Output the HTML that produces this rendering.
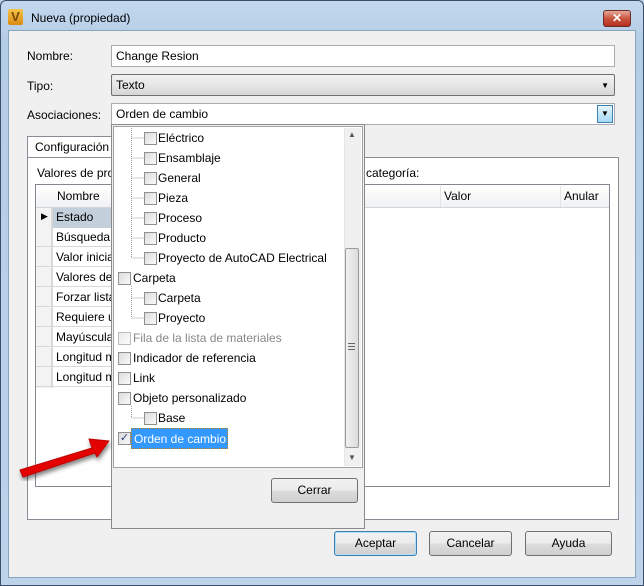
<!DOCTYPE html><html><head><meta charset="utf-8"><style>
*{box-sizing:border-box;margin:0;padding:0}
body{width:644px;height:586px;position:relative;overflow:hidden;font-family:"Liberation Sans",sans-serif;font-size:12px;color:#000;background:#bcd3ea}
.a{position:absolute}
.win{left:0;top:0;width:644px;height:586px;border:1px solid #3b5068;border-radius:6px 6px 0 0;background:linear-gradient(#c3d8ee,#b4cde6 40px,#bcd3ea)}
.client{left:8px;top:30px;width:628px;height:548px;background:#f0f0f0;border:1px solid #8aa2bb}
.lbl{font-size:12px}
.inp{background:#fff;border:1px solid #abadb3;height:22px;padding:3px 4px}
.btn{border:1px solid #707070;border-radius:3px;background:linear-gradient(#f2f2f2,#ebebeb 50%,#dddddd 51%,#cfcfcf);text-align:center;line-height:22px}
.cb{width:13px;height:13px;border:1px solid #8e8f8f;background:linear-gradient(135deg,#dcdcdc,#fafafa)}
.it{position:absolute;height:20px;line-height:20px;white-space:nowrap}
</style></head><body>
<div class="a win"></div>
<div class="a" style="left:8px;top:9px;width:15px;height:16px;background:linear-gradient(#f7c44a,#d98a10);border-radius:2px;color:#7a4a00;font-weight:bold;font-size:13px;line-height:16px;text-align:center">V</div>
<div class="a" style="left:31px;top:11px;font-size:12px">Nueva (propiedad)</div>
<div class="a" style="left:603px;top:10px;width:28px;height:17px;border:1px solid #6e2a24;border-radius:3px;background:linear-gradient(#e6a99b,#c9543f 50%,#b3301e);color:#fff;font-weight:bold;text-align:center;line-height:15px;font-size:12px">✕</div>
<div class="a client"></div>
<div class="a lbl" style="left:27px;top:49px">Nombre:</div>
<div class="a inp" style="left:111px;top:45px;width:504px">Change Resion</div>
<div class="a lbl" style="left:27px;top:79px">Tipo:</div>
<div class="a inp" style="left:111px;top:74px;width:504px;border-color:#707070;border-radius:2px;background:linear-gradient(#f2f2f2,#e6e6e6 50%,#d6d6d6)">Texto<span class="a" style="right:5px;top:6px;font-size:8px">▼</span></div>
<div class="a lbl" style="left:27px;top:108px">Asociaciones:</div>
<div class="a inp" style="left:111px;top:103px;width:504px">Orden de cambio<div class="a" style="right:1px;top:1px;width:16px;height:18px;border:1px solid #3c7fb1;background:linear-gradient(#e5f4fc,#a7d9f5);font-size:8px;text-align:center;line-height:16px">▼</div></div>
<div class="a" style="left:27px;top:136px;width:90px;height:22px;background:#fff;border:1px solid #898c95;border-bottom:none;padding:3px 7px">Configuración</div>
<div class="a" style="left:27px;top:157px;width:592px;height:363px;background:#fff;border:1px solid #898c95"></div>
<div class="a" style="left:37px;top:166px">Valores de pro</div>
<div class="a" style="left:366px;top:166px">categoría:</div>
<div class="a" style="left:35px;top:184px;width:575px;height:303px;border:1px solid #828790;background:#fff"></div>
<div class="a" style="left:36px;top:185px;width:573px;height:23px;background:linear-gradient(#fff,#f1f2f4);border-bottom:1px solid #d5d5d5"></div>
<div class="a" style="left:57px;top:189px">Nombre</div>
<div class="a" style="left:444px;top:189px">Valor</div>
<div class="a" style="left:440px;top:186px;width:1px;height:21px;background:#e3e4e6"></div>
<div class="a" style="left:560px;top:186px;width:1px;height:21px;background:#e3e4e6"></div>
<div class="a" style="left:564px;top:189px">Anular</div>
<div class="a" style="left:36px;top:208px;width:16px;height:180px;background:#f3f3f3;border-right:1px solid #d8d8d8"></div>
<div class="a" style="left:52px;top:208px;width:60px;height:20px;background:#c4cfdc"></div>
<div class="a" style="left:41px;top:211px;font-size:9px">▶</div>
<div class="a" style="left:56px;top:210px">Estado</div>
<div class="a" style="left:56px;top:230px">Búsqueda</div>
<div class="a" style="left:56px;top:250px">Valor inicial</div>
<div class="a" style="left:56px;top:270px">Valores de</div>
<div class="a" style="left:56px;top:290px">Forzar lista</div>
<div class="a" style="left:56px;top:310px">Requiere u</div>
<div class="a" style="left:56px;top:330px">Mayúscula</div>
<div class="a" style="left:56px;top:350px">Longitud m</div>
<div class="a" style="left:56px;top:370px">Longitud m</div>
<div class="a" style="left:36px;top:227px;width:76px;height:160px;background:repeating-linear-gradient(transparent 0 19px,#d8d8d8 19px 20px)"></div>
<div class="a" style="left:52px;top:208px;width:1px;height:180px;background:#d8d8d8"></div>
<div class="a" style="left:111px;top:124px;width:254px;height:405px;background:#f0f0f0;border:1px solid #8a8a8a"></div>
<div class="a" style="left:113px;top:126px;width:250px;height:342px;background:#fff;border:1px solid #a0a0a0"></div>
<div class="a" style="left:344px;top:128px;width:17px;height:338px;background:#f0f0f0;border-left:1px solid #e6e6e6"></div>
<div class="a" style="left:348px;top:130px;font-size:8px;color:#555">▲</div>
<div class="a" style="left:348px;top:453px;font-size:8px;color:#555">▼</div>
<div class="a" style="left:345px;top:248px;width:14px;height:200px;border:1px solid #999;border-radius:2px;background:linear-gradient(90deg,#f0f0f0,#dcdcdc)"></div>
<div class="a" style="left:348px;top:343px;width:7px;height:7px;background:repeating-linear-gradient(#666 0 1px,transparent 1px 3px)"></div>
<svg class="a" style="left:113px;top:126px" width="240" height="342"><g stroke="#a0a0a0" stroke-dasharray="1 1" fill="none">
<path d="M18.5 0V132M18.5 12H31M18.5 32H31M18.5 52H31M18.5 72H31M18.5 92H31M18.5 112H31M18.5 132H31"/>
<path d="M18.5 160V192M18.5 172H31M18.5 192H31M18.5 280V292H31"/></g></svg>
<div class="a cb" style="left:144px;top:132px"></div><div class="it" style="left:158px;top:128px">Eléctrico</div>
<div class="a cb" style="left:144px;top:152px"></div><div class="it" style="left:158px;top:148px">Ensamblaje</div>
<div class="a cb" style="left:144px;top:172px"></div><div class="it" style="left:158px;top:168px">General</div>
<div class="a cb" style="left:144px;top:192px"></div><div class="it" style="left:158px;top:188px">Pieza</div>
<div class="a cb" style="left:144px;top:212px"></div><div class="it" style="left:158px;top:208px">Proceso</div>
<div class="a cb" style="left:144px;top:232px"></div><div class="it" style="left:158px;top:228px">Producto</div>
<div class="a cb" style="left:144px;top:252px"></div><div class="it" style="left:158px;top:248px">Proyecto de AutoCAD Electrical</div>
<div class="a cb" style="left:118px;top:272px"></div><div class="it" style="left:133px;top:268px">Carpeta</div>
<div class="a cb" style="left:144px;top:292px"></div><div class="it" style="left:158px;top:288px">Carpeta</div>
<div class="a cb" style="left:144px;top:312px"></div><div class="it" style="left:158px;top:308px">Proyecto</div>
<div class="a cb" style="left:118px;top:332px;opacity:.6"></div><div class="it" style="left:133px;top:328px;color:#888">Fila de la lista de materiales</div>
<div class="a cb" style="left:118px;top:352px"></div><div class="it" style="left:133px;top:348px">Indicador de referencia</div>
<div class="a cb" style="left:118px;top:372px"></div><div class="it" style="left:133px;top:368px">Link</div>
<div class="a cb" style="left:118px;top:392px"></div><div class="it" style="left:133px;top:388px">Objeto personalizado</div>
<div class="a cb" style="left:144px;top:412px"></div><div class="it" style="left:158px;top:408px">Base</div>
<div class="a cb" style="left:118px;top:432px;color:#2a3f7a;font-size:11px;line-height:11px;text-align:center">✓</div>
<div class="it" style="left:131px;top:428px;width:97px;height:21px;background:#3399ff;color:#fff;padding-left:2px;border:1px dotted #c08020">Orden de cambio</div>
<div class="a btn" style="left:271px;top:478px;width:87px;height:25px">Cerrar</div>
<div class="a btn" style="left:334px;top:531px;width:83px;height:25px;border-color:#3c7fb1;box-shadow:inset 0 0 0 1px #aee0f8">Aceptar</div>
<div class="a btn" style="left:429px;top:531px;width:83px;height:25px">Cancelar</div>
<div class="a btn" style="left:525px;top:531px;width:87px;height:25px">Ayuda</div>
<svg class="a" style="left:10px;top:430px" width="110" height="55"><defs><filter id="s"><feDropShadow dx="1" dy="3" stdDeviation="2" flood-opacity=".5"/></filter></defs>
<path d="M10 40L82 18L79 9L99 11L87 27L85 23L13 47Z" fill="#e30000" filter="url(#s)" stroke="#c00000" stroke-linejoin="round"/></svg>
</body></html>
